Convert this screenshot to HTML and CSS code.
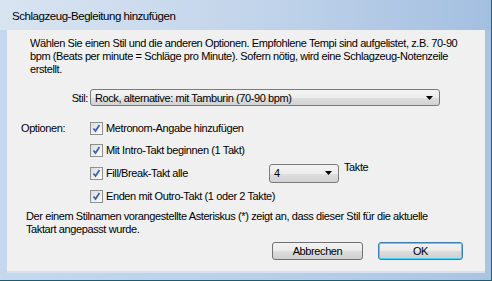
FILE: index.html
```html
<!DOCTYPE html>
<html lang="de">
<head>
    <meta charset="UTF-8">
    <title>Schlagzeug-Begleitung hinzufügen</title>
    <link rel="stylesheet" href="styles.css">
</head>
<body>
    <div class="window">
        <div class="titlebar">Schlagzeug-Begleitung hinzufügen</div>
        <div class="client">
            <p class="intro">Wählen Sie einen Stil und die anderen Optionen. Empfohlene Tempi sind aufgelistet, z.B. 70-90<br>bpm (Beats per minute = Schläge pro Minute). Sofern nötig, wird eine Schlagzeug-Notenzeile<br>erstellt.</p>

            <div class="style-row">
                <span class="style-label">Stil:</span>
                <div class="combo combo-wide">
                    <span class="combo-text">Rock, alternative: mit Tamburin (70-90 bpm)</span>
                    <svg class="combo-arrow" width="7" height="4" viewBox="0 0 7 4"><path d="M0 0h7L3.5 4z" fill="#000"/></svg>
                </div>
            </div>

            <div class="options">
                <span class="options-label">Optionen:</span>
                <div class="option-list">
                    <label class="option">
                        <span class="check"><svg width="9" height="9" viewBox="0 0 9 9"><path d="M1.5 4.5l2 2.5 4-6" fill="none" stroke="#3d63a8" stroke-width="1.8"/></svg></span>
                        Metronom-Angabe hinzufügen
                    </label>
                    <label class="option">
                        <span class="check"><svg width="9" height="9" viewBox="0 0 9 9"><path d="M1.5 4.5l2 2.5 4-6" fill="none" stroke="#3d63a8" stroke-width="1.8"/></svg></span>
                        Mit Intro-Takt beginnen (1 Takt)
                    </label>
                    <div class="option option-fill">
                        <label class="option-inline">
                            <span class="check"><svg width="9" height="9" viewBox="0 0 9 9"><path d="M1.5 4.5l2 2.5 4-6" fill="none" stroke="#3d63a8" stroke-width="1.8"/></svg></span>
                            Fill/Break-Takt alle
                        </label>
                        <div class="combo combo-small">
                            <span class="combo-text">4</span>
                            <svg class="combo-arrow" width="7" height="4" viewBox="0 0 7 4"><path d="M0 0h7L3.5 4z" fill="#000"/></svg>
                        </div>
                        <span class="takte">Takte</span>
                    </div>
                    <label class="option">
                        <span class="check"><svg width="9" height="9" viewBox="0 0 9 9"><path d="M1.5 4.5l2 2.5 4-6" fill="none" stroke="#3d63a8" stroke-width="1.8"/></svg></span>
                        Enden mit Outro-Takt (1 oder 2 Takte)
                    </label>
                </div>
            </div>

            <p class="note">Der einem Stilnamen vorangestellte Asteriskus (*) zeigt an, dass dieser Stil für die aktuelle<br>Taktart angepasst wurde.</p>

            <div class="buttons">
                <button class="btn btn-cancel">Abbrechen</button>
                <button class="btn btn-default">OK</button>
            </div>
        </div>
    </div>
</body>
</html>
```

FILE: styles.css
```css
body {
    margin: 0;
    font-family: 'Liberation Sans', Arial, sans-serif;
    font-size: 11px;
    letter-spacing: -0.4px;
    color: #000000;
    background: #1d5b6d;
    white-space: nowrap;
}

.window {
    width: 492px;
    height: 281px;
    box-sizing: border-box;
    background: linear-gradient(90deg, #c6d8ee, #b4cce8 70%, #a9c4e3);
    border-right: 1px solid #2d5f72;
    border-bottom: 1px solid #1d5b6d;
    padding: 0 6px 7px 7px;
    display: flex;
    flex-direction: column;
}

.titlebar {
    height: 30px;
    flex: none;
    box-sizing: border-box;
    display: flex;
    align-items: center;
    padding: 2px 0 0 12px;
    font-size: 11.5px;
    letter-spacing: -0.45px;
    background: linear-gradient(90deg, #d9e4f1, #c3d5eb 50%, #a3bfe0);
    margin: 0 -6px 0 -7px;
}

.client {
    flex: 1;
    background: #f0f0f0;
    border-bottom: 2px solid #d6e2f0;
}

.intro {
    margin: 7px 0 0 23px;
    line-height: 13px;
}

.style-row {
    display: flex;
    align-items: center;
    margin-top: 13px;
}

.style-label {
    width: 81px;
    text-align: right;
    margin-right: 2px;
}

.combo {
    box-sizing: border-box;
    height: 17px;
    display: flex;
    align-items: center;
    justify-content: space-between;
    border: 1px solid #7a7a7a;
    border-radius: 3px;
    background: linear-gradient(#f4f4f4, #ececec 50%, #dfdfdf 51%, #d2d2d2);
    padding: 0 6px 0 4px;
}

.combo-wide {
    width: 350px;
}

.combo-small {
    width: 70px;
    height: 19px;
}

.options {
    display: flex;
    margin-top: 15px;
}

.options-label {
    width: 83px;
    padding-left: 14px;
    box-sizing: border-box;
    line-height: 14px;
}

.option-list {
    display: flex;
    flex-direction: column;
    gap: 8px;
}

.option, .option-inline {
    display: flex;
    align-items: center;
    height: 14px;
}

.option-fill {
    height: 16px;
}

.option-inline {
    width: 179px;
}

.check {
    box-sizing: border-box;
    width: 13px;
    height: 13px;
    border: 1px solid #8e8f8f;
    background: linear-gradient(135deg, #dcdcdc, #ffffff);
    display: flex;
    align-items: center;
    justify-content: center;
    margin-right: 3px;
}

.takte {
    align-self: flex-start;
    margin: -4px 0 0 5px;
}

.note {
    margin: 7px 0 0 19px;
    line-height: 13px;
}

.buttons {
    display: flex;
    justify-content: flex-end;
    gap: 15px;
    margin: 6px 22px 0 0;
}

.btn {
    font-family: inherit;
    font-size: 11px;
    letter-spacing: -0.4px;
    height: 18px;
    border: 1px solid #707070;
    border-radius: 3px;
    background: linear-gradient(#f2f2f2, #ebebeb 50%, #dddddd 51%, #cfcfcf);
    padding: 0;
}

.btn-cancel {
    width: 91px;
}

.btn-default {
    width: 85px;
    border-color: #3c7fb1;
    box-shadow: inset 0 0 0 1px #48d4fa;
}
```
